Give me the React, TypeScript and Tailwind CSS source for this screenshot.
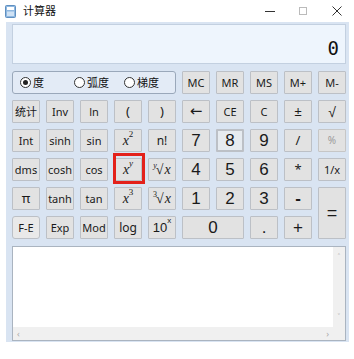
import React from "react";

const ui = { fontFamily: '"Noto Sans", "Noto Sans CJK SC", sans-serif' };
const num = { fontFamily: '"Liberation Sans", Arial, sans-serif' };
const serif = { fontFamily: '"Liberation Serif", "Times New Roman", serif' };

type BtnProps = {
  children: React.ReactNode;
  className?: string;
  style?: React.CSSProperties;
};

function Btn({ children, className = "", style }: BtnProps) {
  return (
    <div
      className={
        "relative flex items-center justify-center border border-[#bcc0c6] bg-[#e2e2e2] text-[#1a1a1a] rounded-[1px] " +
        className
      }
      style={style}
    >
      {children}
    </div>
  );
}

function Small({ children, className = "" }: { children: React.ReactNode; className?: string }) {
  return (
    <Btn className={"text-[11px] leading-none " + className} style={ui}>
      {children}
    </Btn>
  );
}

function Num({ children, className = "" }: { children: React.ReactNode; className?: string }) {
  return (
    <Btn className={"text-[17px] leading-none " + className} style={num}>
      {children}
    </Btn>
  );
}

function Radio({ checked, label }: { checked?: boolean; label: string }) {
  return (
    <div className="flex items-center gap-[2px]">
      <div className="w-[11px] h-[11px] rounded-full border border-[#333] bg-white flex items-center justify-center">
        {checked && <div className="w-[5px] h-[5px] rounded-full bg-[#222]" />}
      </div>
      <span className="text-[11px] leading-none text-[#111]" style={ui}>
        {label}
      </span>
    </div>
  );
}

export default function App() {
  return (
    <div className="w-[354px] h-[359px] bg-white relative overflow-hidden">
      {/* title bar */}
      <div className="h-[22px] flex items-center">
        <svg width="11" height="13" viewBox="0 0 11 13" className="ml-[5px]">
          <rect x="0.5" y="0.5" width="10" height="12" rx="1" fill="#8fb8e0" stroke="#5f8fc0" />
          <rect x="2" y="2" width="7" height="3" fill="#ffffff" />
          <rect x="2" y="6.5" width="7" height="4.5" fill="#cfe2f5" />
        </svg>
        <span className="ml-[7px] text-[11px] text-[#111]" style={ui}>
          计算器
        </span>
        <div className="ml-auto flex items-center">
          <span className="w-[10px] h-[1px] bg-[#333] mr-[24px]" />
          <span className="w-[8px] h-[8px] border border-[#bbb] mr-[25px]" />
          <svg width="10" height="10" viewBox="0 0 10 10" className="mr-[12px]">
            <path d="M0.5 0.5 L9.5 9.5 M9.5 0.5 L0.5 9.5" stroke="#333" strokeWidth="1" />
          </svg>
        </div>
      </div>

      {/* main panel */}
      <div className="ml-[6px] w-[343px] h-[320px] bg-[#d9e4f2] pt-[2px] pl-[6px]">
        {/* display */}
        <div className="w-[334px] h-[40px] border border-[#c3d0e0] bg-[#eef5fd] flex items-end justify-end pr-[6px] pb-[5px]">
          <span
            className="text-[19px] leading-none text-[#111]"
            style={{ fontFamily: '"DejaVu Sans Mono", monospace' }}
          >
            0
          </span>
        </div>

        {/* keypad */}
        <div className="mt-[7px] grid grid-cols-[repeat(10,28px)] auto-rows-[23px] gap-[6px]">
          <div className="col-span-5 rounded-[3px] border border-[#9aa8ba] bg-[#e3ebf6] flex items-center pl-[7px]">
            <div className="w-[54px]">
              <Radio checked label="度" />
            </div>
            <div className="w-[50px]">
              <Radio label="弧度" />
            </div>
            <Radio label="梯度" />
          </div>
          <Small>MC</Small>
          <Small>MR</Small>
          <Small>MS</Small>
          <Small>M+</Small>
          <Small>M-</Small>

          <Small>统计</Small>
          <Small>Inv</Small>
          <Small>ln</Small>
          <Small className="text-[13px]">(</Small>
          <Small className="text-[13px]">)</Small>
          <Btn className="text-[15px] leading-none" style={{ fontFamily: '"DejaVu Sans", sans-serif' }}>
            ←
          </Btn>
          <Small className="text-[10px]">CE</Small>
          <Small>C</Small>
          <Btn className="text-[13px] leading-none" style={num}>
            ±
          </Btn>
          <Btn className="text-[14px] leading-none" style={num}>
            √
          </Btn>

          <Small>Int</Small>
          <Small>sinh</Small>
          <Small>sin</Small>
          <Btn className="text-[14px] italic" style={serif}>
            x<sup className="text-[9px] not-italic -mt-[4px]">2</sup>
          </Btn>
          <Small className="text-[12px]">n!</Small>
          <Num>7</Num>
          <Num className="border-[#3c7fb1] border-[2px] bg-[#e6ebf0]">8</Num>
          <Num>9</Num>
          <Small className="text-[13px]">/</Small>
          <Btn className="text-[10px] bg-[#d6d6d6] border-[#c6c6c6] text-[#9a9a9a]" style={ui}>
            %
          </Btn>

          <Small>dms</Small>
          <Small>cosh</Small>
          <Small>cos</Small>
          <Btn className="text-[14px] italic" style={serif}>
            x<sup className="text-[9px] -mt-[4px]">y</sup>
            <div className="absolute -left-[2px] -right-[4px] -top-[6px] -bottom-[4px] border-[3px] border-[#e3211b]" />
          </Btn>
          <Btn className="text-[14px]" style={serif}>
            <sup className="text-[8px] italic -mr-[1px]">y</sup>√<span className="italic ml-[1px]">x</span>
          </Btn>
          <Num>4</Num>
          <Num>5</Num>
          <Num>6</Num>
          <Small className="text-[13px]">*</Small>
          <Small>1/x</Small>

          <Small className="text-[13px]">π</Small>
          <Small>tanh</Small>
          <Small>tan</Small>
          <Btn className="text-[14px] italic" style={serif}>
            x<sup className="text-[9px] not-italic -mt-[4px]">3</sup>
          </Btn>
          <Btn className="text-[14px]" style={serif}>
            <sup className="text-[8px] -mr-[1px]">3</sup>√<span className="italic ml-[1px]">x</span>
          </Btn>
          <Num>1</Num>
          <Num>2</Num>
          <Num>3</Num>
          <Num className="text-[17px] font-bold">-</Num>
          <Num className="row-span-2 text-[18px]">=</Num>

          <Small className="text-[10px] rounded-[3px] bg-[#e9e9e9] border-[#a9a9a9]">F-E</Small>
          <Small>Exp</Small>
          <Small className="text-[10px]">Mod</Small>
          <Small className="text-[12px]">log</Small>
          <Btn className="text-[13px]" style={num}>
            10<sup className="text-[8px] -mt-[5px]">x</sup>
          </Btn>
          <Num className="col-span-2">0</Num>
          <Num className="text-[14px]">.</Num>
          <Num className="text-[16px]">+</Num>
        </div>

        {/* history */}
        <div className="mt-[7px] w-[334px] h-[95px] border border-[#aab4c0] bg-white flex flex-col">
          <div className="flex flex-1">
            <div className="flex-1" />
            <div className="w-[12px] bg-[#f0f0f0] flex flex-col items-center justify-between py-[4px] text-[8px] text-[#aaa]">
              <span>˄</span>
              <span>˅</span>
            </div>
          </div>
          <div className="h-[13px] flex">
            <div className="flex-1 bg-[#f0f0f0] flex items-center justify-between px-[4px] text-[9px] text-[#aaa]">
              <span>‹</span>
              <span>›</span>
            </div>
            <div className="w-[12px] bg-[#f0f0f0]" />
          </div>
        </div>
      </div>
    </div>
  );
}
